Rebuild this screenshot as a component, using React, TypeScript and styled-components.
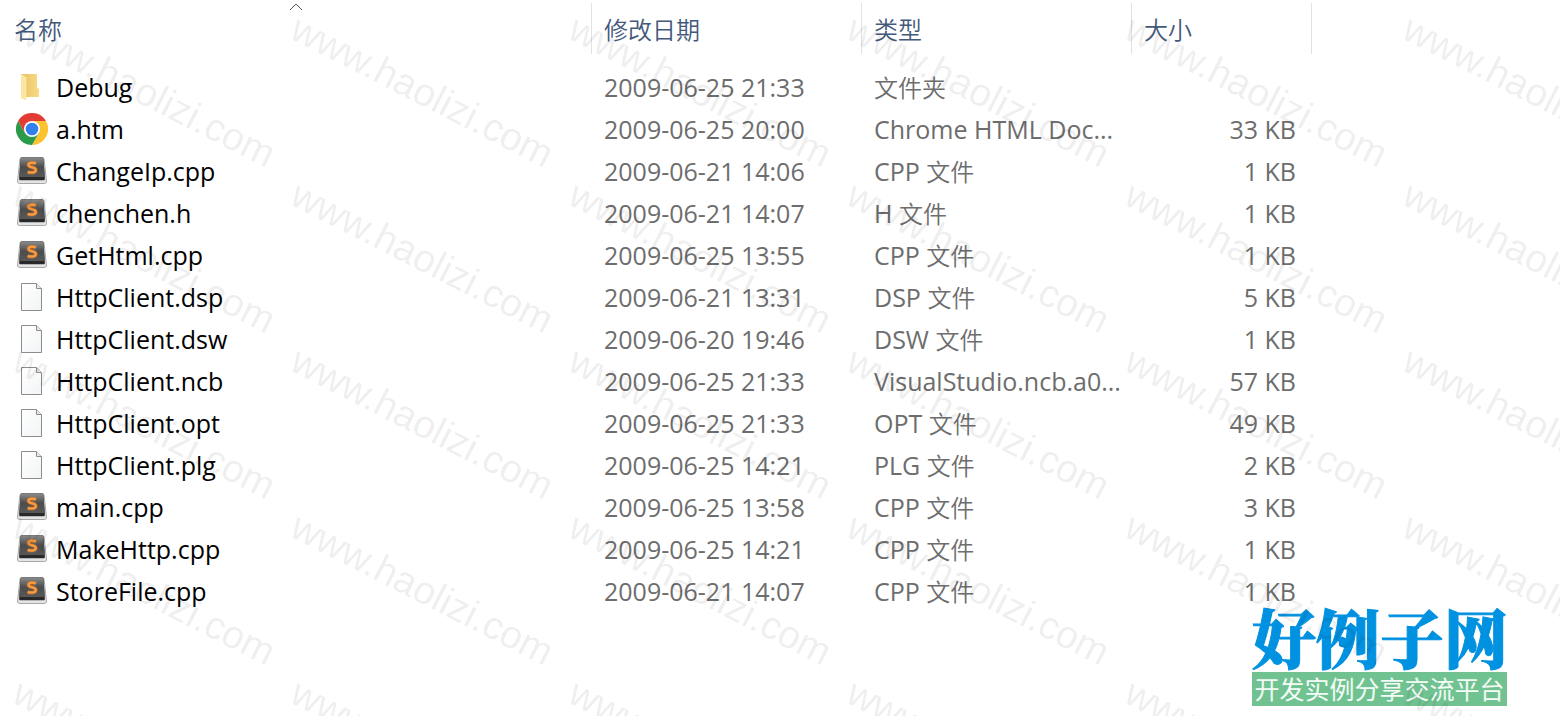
import React from "react";
import styled, { createGlobalStyle } from "styled-components";

const latin = '"Open Sans", "Noto Sans"';
const cjk = '"Noto Sans CJK SC"';

const GlobalStyle = createGlobalStyle`
  *, *::before, *::after { box-sizing: border-box; }
  body {
    margin: 0;
    background: #fff;
    font-family: ${latin}, ${cjk}, sans-serif;
  }
`;

const Page = styled.main`
  position: relative;
  min-height: 100vh;
  overflow: hidden;
  background: #fff;
`;

const FileTable = styled.table`
  width: 1312px;
  table-layout: fixed;
  border-collapse: separate;
  border-spacing: 0;
  font-size: 25px;
  line-height: 42px;
`;

const Column = styled.col<{ $width: number }>`
  width: ${(p) => p.$width}px;
`;

const HeadCell = styled.th`
  position: relative;
  height: 66px;
  padding: 3px 0 12px;
  font-weight: 400;
  text-align: left;
  vertical-align: top;
`;

const SortButton = styled.button<{ $first?: boolean }>`
  display: block;
  width: 100%;
  height: 51px;
  margin: 0;
  padding: 0 ${(p) => (p.$first ? 14 : 12)}px;
  border: 0;
  border-right: 1px solid #e2e2e2;
  background: none;
  color: #43597b;
  font: 350 24px / 50px ${cjk}, sans-serif;
  text-align: left;
`;

const SortArrow = styled.svg`
  position: absolute;
  top: 3px;
  left: 50%;
  width: 14px;
  height: 8px;
  margin-left: -7px;
`;

const Cell = styled.td<{ $size?: boolean }>`
  height: 42px;
  padding: 0 ${(p) => (p.$size ? 16 : 0)}px 0 12px;
  overflow: hidden;
  color: #6d6d6d;
  text-align: ${(p) => (p.$size ? "right" : "left")};
  text-overflow: ellipsis;
  white-space: nowrap;
`;

const NameCell = styled(Cell)`
  padding-left: 16px;
  color: #000;
`;

const FileName = styled.div`
  display: flex;
  align-items: center;
  gap: 8px;
`;

const Han = styled.span`
  font: 350 24px / 1 ${cjk}, sans-serif;
`;

const Icon = styled.svg`
  flex: none;
  width: 32px;
  height: 32px;
`;

const Watermarks = styled.div`
  position: absolute;
  z-index: 2;
  inset: 0;
  display: grid;
  grid-template-columns: repeat(6, 278px);
  grid-auto-rows: 166px;
  padding: 8px 0 0 16px;
  overflow: hidden;
  pointer-events: none;
`;

const Watermark = styled.span`
  transform: rotate(27deg);
  transform-origin: 0 0;
  padding-left: 8px;
  color: rgba(0, 0, 0, 0.08);
  font: 39px / 32px "Liberation Sans", sans-serif;
  white-space: nowrap;
`;

const SiteLogo = styled.aside`
  position: absolute;
  z-index: 1;
  right: 53px;
  top: 606px;
  width: 255px;
`;

const SiteTitle = styled.div`
  height: 66px;
  color: #0091e0;
  font: 900 64px / 58px "Noto Serif CJK SC", ${cjk}, serif;
  text-align: center;
  white-space: nowrap;
  -webkit-text-stroke: 1px #0091e0;
`;

const SiteMotto = styled.div`
  height: 34px;
  background: #70c391;
  color: #f4fbf6;
  font: 400 25px / 32px ${cjk}, sans-serif;
  text-align: center;
  white-space: nowrap;
`;

type Kind = "folder" | "chrome" | "sublime" | "blank";

function FileIcon({ kind }: { kind: Kind }) {
  if (kind === "folder") {
    return (
      <Icon viewBox="0 0 32 32" aria-hidden="true">
        <defs>
          <linearGradient id="folderBack" x1="0" x2="1">
            <stop offset="0.300" stopColor="#ecc96e" />
            <stop offset="1" stopColor="#fadb85" />
          </linearGradient>
        </defs>
        <path d="M5 3H21V17L23 18V26H8L5 23Z" fill="url(#folderBack)" />
        <path d="M5 3L10.500 6.500V24L10 29.500L5 27Z" fill="#fde6a2" />
      </Icon>
    );
  }
  if (kind === "chrome") {
    return (
      <Icon viewBox="0 0 32 32" aria-hidden="true">
        <path d="M16 8H29.860A16 16 0 0 1 16 32L22.930 20Z" fill="#fcc22f" />
        <path d="M9.070 20L2.140 8A16 16 0 0 0 16 32L22.930 20Z" fill="#2c9a4b" />
        <path d="M16 8H29.860A16 16 0 0 0 2.140 8L9.070 20Z" fill="#e23c33" />
        <circle cx="16" cy="16" r="8" fill="#fff" />
        <circle cx="16" cy="16" r="6.300" fill="#3180ee" />
      </Icon>
    );
  }
  if (kind === "sublime") {
    return (
      <Icon viewBox="0 0 32 32" aria-hidden="true">
        <defs>
          <linearGradient id="keyTop" x1="0" x2="0" y1="0" y2="1">
            <stop offset="0" stopColor="#8c8c8c" />
            <stop offset="0.500" stopColor="#4c4c4c" />
            <stop offset="1" stopColor="#585858" />
          </linearGradient>
        </defs>
        <path d="M4 4Q4.200 2.500 6 2.500H26Q27.800 2.500 28 4L30.500 26Q30.700 28.500 28.500 28.500H3.500Q1.300 28.500 1.500 26Z" fill="#e4e4e4" stroke="#a8a8a8" strokeWidth="1" />
        <path d="M4.500 4Q4.700 2.300 6 2.300H26Q27.300 2.300 27.500 4L28.800 22V24.500Q28.800 25.300 27.800 25.300H4.200Q3.200 25.300 3.200 24.500V22Z" fill="#292929" />
        <path d="M4.500 4Q4.700 2.300 6 2.300H26Q27.300 2.300 27.500 4L28.600 22H3.400Z" fill="url(#keyTop)" />
        <path d="M20 8.500C17.500 7.200 12.500 7.300 12.500 10C12.500 13 19.800 11.600 19.800 15C19.800 17.700 15 18.200 11.600 16.800" fill="none" stroke="#d9782a" strokeOpacity="0.350" strokeWidth="4.500" />
        <path d="M20 8.500C17.500 7.200 12.500 7.300 12.500 10C12.500 13 19.800 11.600 19.800 15C19.800 17.700 15 18.200 11.600 16.800" fill="none" stroke="#fb9a3c" strokeWidth="2.500" />
      </Icon>
    );
  }
  return (
    <Icon viewBox="0 0 32 32" aria-hidden="true">
      <defs>
        <linearGradient id="sheet" x1="0" x2="1" y1="0" y2="1">
          <stop offset="0" stopColor="#fff" />
          <stop offset="1" stopColor="#f1f4f6" />
        </linearGradient>
      </defs>
      <path d="M5.500 2.500H20.500L25.500 7.500V29.500H5.500Z" fill="url(#sheet)" stroke="#8c8c8c" />
      <path d="M20.500 2.500V7.500H25.500" fill="#e8e8e8" stroke="#8c8c8c" />
    </Icon>
  );
}

interface FileRow {
  kind: Kind;
  name: string;
  date: string;
  type: string;
  size: string;
}

const files: FileRow[] = [
  { kind: "folder", name: "Debug", date: "2009-06-25 21:33", type: "文件夹", size: "" },
  { kind: "chrome", name: "a.htm", date: "2009-06-25 20:00", type: "Chrome HTML Doc...", size: "33 KB" },
  { kind: "sublime", name: "ChangeIp.cpp", date: "2009-06-21 14:06", type: "CPP 文件", size: "1 KB" },
  { kind: "sublime", name: "chenchen.h", date: "2009-06-21 14:07", type: "H 文件", size: "1 KB" },
  { kind: "sublime", name: "GetHtml.cpp", date: "2009-06-25 13:55", type: "CPP 文件", size: "1 KB" },
  { kind: "blank", name: "HttpClient.dsp", date: "2009-06-21 13:31", type: "DSP 文件", size: "5 KB" },
  { kind: "blank", name: "HttpClient.dsw", date: "2009-06-20 19:46", type: "DSW 文件", size: "1 KB" },
  { kind: "blank", name: "HttpClient.ncb", date: "2009-06-25 21:33", type: "VisualStudio.ncb.a0...", size: "57 KB" },
  { kind: "blank", name: "HttpClient.opt", date: "2009-06-25 21:33", type: "OPT 文件", size: "49 KB" },
  { kind: "blank", name: "HttpClient.plg", date: "2009-06-25 14:21", type: "PLG 文件", size: "2 KB" },
  { kind: "sublime", name: "main.cpp", date: "2009-06-25 13:58", type: "CPP 文件", size: "3 KB" },
  { kind: "sublime", name: "MakeHttp.cpp", date: "2009-06-25 14:21", type: "CPP 文件", size: "1 KB" },
  { kind: "sublime", name: "StoreFile.cpp", date: "2009-06-21 14:07", type: "CPP 文件", size: "1 KB" },
];

function TypeLabel({ text }: { text: string }) {
  const start = text.search(/[\u4e00-\u9fff]/);
  if (start < 0) return <>{text}</>;
  return (
    <>
      {text.slice(0, start)}
      <Han>{text.slice(start)}</Han>
    </>
  );
}

export default function App() {
  return (
    <Page>
      <GlobalStyle />
      <FileTable>
        <colgroup>
          <Column $width={592} />
          <Column $width={270} />
          <Column $width={270} />
          <Column $width={180} />
        </colgroup>
        <thead>
          <tr>
            <HeadCell aria-sort="ascending">
              <SortButton $first>名称</SortButton>
              <SortArrow viewBox="0 0 14 8" aria-hidden="true">
                <path d="M1 7L7 1L13 7" fill="none" stroke="#555" />
              </SortArrow>
            </HeadCell>
            {["修改日期", "类型", "大小"].map((label) => (
              <HeadCell key={label}>
                <SortButton>{label}</SortButton>
              </HeadCell>
            ))}
          </tr>
        </thead>
        <tbody>
          {files.map((file) => (
            <tr key={file.name}>
              <NameCell>
                <FileName>
                  <FileIcon kind={file.kind} />
                  {file.name}
                </FileName>
              </NameCell>
              <Cell>{file.date}</Cell>
              <Cell>
                <TypeLabel text={file.type} />
              </Cell>
              <Cell $size>{file.size}</Cell>
            </tr>
          ))}
        </tbody>
      </FileTable>
      <SiteLogo>
        <SiteTitle>好例子网</SiteTitle>
        <SiteMotto>开发实例分享交流平台</SiteMotto>
      </SiteLogo>
      <Watermarks aria-hidden="true">
        {Array.from({ length: 30 }, (_, i) => (
          <Watermark key={i}>www.haolizi.com</Watermark>
        ))}
      </Watermarks>
    </Page>
  );
}
